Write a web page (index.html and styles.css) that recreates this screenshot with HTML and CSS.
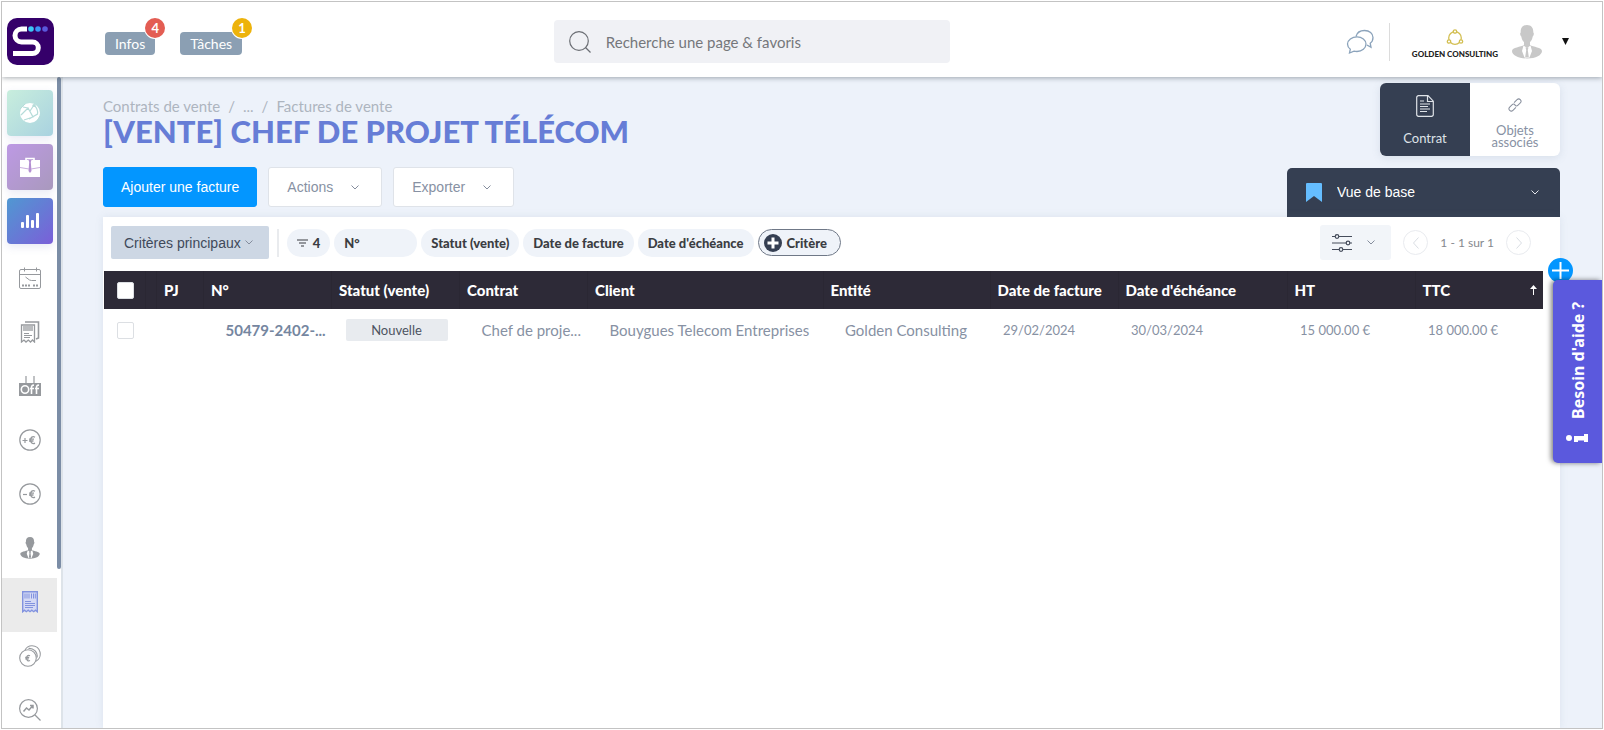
FILE: index.html
```html
<!DOCTYPE html>
<html lang="fr">
<head>
    <meta charset="UTF-8">
    <meta name="viewport" content="width=device-width, initial-scale=1.0">
    <title>Factures de vente</title>
    <link rel="stylesheet" href="styles.css">
</head>
<body>

<div class="app">

    <!-- Top bar -->
    <header class="topbar">
        <div class="topbar-left">
            <a href="#" class="logo" aria-label="Accueil">
                <svg width="47" height="47" viewBox="0 0 47 47">
                    <rect width="47" height="47" rx="10" fill="#35006a"/>
                    <path d="M20 11h-5.500a6.500 6.500 0 0 0 0 13h11a5.800 5.800 0 0 1 0 11.600H6" fill="none" stroke="#fff" stroke-width="5"/>
                    <circle cx="24" cy="11" r="2.800" fill="#3cc8f5"/>
                    <circle cx="31" cy="11" r="2.800" fill="#3b93f7"/>
                    <circle cx="38" cy="11" r="2.800" fill="#5b57dc"/>
                </svg>
            </a>
            <button type="button" class="notif">Infos<span class="count red">4</span></button>
            <button type="button" class="notif">Tâches<span class="count yellow">1</span></button>
        </div>

        <form class="search">
            <svg width="24" height="24" viewBox="0 0 24 24" fill="none" stroke="#6b6e74" stroke-width="1.200">
                <circle cx="10" cy="11" r="9.300"/>
                <path d="M16.500 17.500l5 5"/>
            </svg>
            <input type="text" aria-label="Recherche" placeholder="Recherche une page &amp; favoris">
        </form>

        <div class="topbar-right">
            <button type="button" class="chat" aria-label="Messages">
                <svg width="28" height="26" viewBox="0 0 28 26" fill="none" stroke="#8ba3bb" stroke-width="1.300">
                    <path d="M10 7.500C11 3.500 14.500 1.500 18.500 1.500c5 0 8.500 3 8.500 7 0 2.500-1 4.500-2.800 5.700l.8 4-4.200-2.200"/>
                    <path d="M11 7.800c5 0 9 3.200 9 7.200s-4 7.500-9 7.500c-1 0-2-.100-3-.400L3.500 24l.8-3.800C2.500 18.800 1.500 17 1.500 15c0-4 4.500-7.200 9.500-7.200z"/>
                </svg>
            </button>
            <div class="company">
                <svg width="18" height="17" viewBox="0 0 18 17" fill="none" stroke="#d3bf52" stroke-width="1.300">
                    <circle cx="9" cy="9" r="6.300"/>
                    <g fill="#fff"><circle cx="9" cy="2.500" r="1.700"/><circle cx="3" cy="12.500" r="1.700"/><circle cx="15" cy="12.500" r="1.700"/></g>
                </svg>
                <span>GOLDEN CONSULTING</span>
            </div>
            <svg width="30" height="34" viewBox="0 0 30 34" fill="#c8c8c8">
                <path d="M15 0c4.500 0 6.500 3 6.300 7.500 1 .5.500 3.500-.6 4-.5 3-1.500 4.500-2.700 5.500v3c3 2 12 2.500 12 6 0 4-6 7.500-15 7.500S0 30 0 26c0-3.500 9-4 12-6v-3c-1.200-1-2.200-2.500-2.700-5.500-1.100-.5-1.600-3.500-.6-4C8.500 3 10.500 0 15 0z"/>
                <path d="M11.500 20.500L15 23l3.500-2.500L20 26l-2.500 6.500h-5L10 26z" fill="#fff"/>
                <path d="M13.500 22.500h3l-.7 2.500 1 7h-3.600l1-7z"/>
            </svg>
            <button type="button" class="caret" aria-label="Mon compte">
                <svg width="7" height="7" viewBox="0 0 7 7"><path d="M0 0h7L3.500 7z" fill="#111"/></svg>
            </button>
        </div>
    </header>

    <div class="body">

        <!-- Side menu -->
        <nav class="sidebar">
            <div class="scroll-thumb"></div>
            <a href="#" class="tile green" aria-label="Réseau">
                <svg width="22" height="22" viewBox="0 0 22 22">
                    <circle cx="11" cy="11" r="10" fill="#fff"/>
                    <path d="M2 13L9 6l5 9-9 3M15 3l-4 6M15 3c3 3 4 6 3.500 9L10 17M4 5l5 1" fill="none" stroke="#b5dcd9" stroke-width="1.200"/>
                    <path d="M1 7l5-5M18 19l3-5" stroke="#b5dcd9"/>
                    <circle cx="15" cy="3.500" r="1.600" fill="#b5dcd9"/>
                </svg>
            </a>
            <a href="#" class="tile purple" aria-label="Missions">
                <svg width="22" height="20" viewBox="0 0 22 20">
                    <path d="M7 3V1.500h8V3" fill="none" stroke="#fff" stroke-width="1.600"/>
                    <path d="M1 3h20v17H1z" fill="#fff"/>
                    <path d="M9.500 3h3l-.7 2 .7 9-1.500 2-1.500-2 .7-9z" fill="#b48fd2"/>
                    <path d="M1 10.500l9 1.500M21 10.500L12 12" stroke="#c9aede" fill="none"/>
                </svg>
            </a>
            <a href="#" class="tile blue" aria-label="Statistiques">
                <svg width="18" height="16" viewBox="0 0 18 16" fill="#fff">
                    <rect y="9" width="3" height="6" rx="1"/><rect x="5" y="2" width="3" height="13" rx="1"/>
                    <rect x="10" y="7" width="3" height="8" rx="1"/><rect x="15" width="3" height="15" rx="1"/>
                </svg>
            </a>
            <a href="#" class="item" aria-label="Planning">
                <svg width="22" height="22" viewBox="0 0 22 22" fill="none" stroke="#96999d">
                    <rect x=".5" y="2.500" width="21" height="19" rx="1.500"/>
                    <path d="M.5 7.500h21M5.500.5v4M17.500.5v4M6.500 10l4 3 2 .5h4.500"/>
                    <path d="M3 18.500h8M14 18.500h5" stroke-width="2" stroke-dasharray="2 1"/>
                </svg>
            </a>
            <a href="#" class="item" aria-label="Factures d'achat">
                <svg width="20" height="22" viewBox="0 0 20 22" fill="none" stroke="#96999d">
                    <path d="M5 1h13.500v16l-2.500 1" stroke-width="1.600"/>
                    <path d="M1.500 4h13v17l-2-2-2 2-2.200-2-2.300 2-2-2-2.500 2z" stroke-width="1.300"/>
                    <path d="M4 5v5M6 5v5M8 5v5M10 5v5M12 5v5" stroke-width="1.300"/>
                    <path d="M4 12.500h5M4 14.500h8M4 16.500h6"/>
                </svg>
            </a>
            <a href="#" class="item" aria-label="Absences">
                <svg width="22" height="20" viewBox="0 0 22 20">
                    <path d="M7 0v8M15 0v8" stroke="#96999d" stroke-width="1.200"/>
                    <rect y="7" width="22" height="13" fill="#96999d"/>
                    <g fill="none" stroke="#fff" stroke-width="1.600">
                        <circle cx="6" cy="13.500" r="3.700"/>
                        <path d="M12.500 18v-6.500c0-2 1-2.500 2.500-2.300M11 12.500h4M17.500 18v-6.500c0-2 1-2.500 2.500-2.300M16 12.500h4"/>
                    </g>
                </svg>
            </a>
            <a href="#" class="item" aria-label="Recettes">
                <svg width="22" height="22" viewBox="0 0 22 22" fill="none" stroke="#96999d" stroke-width="1.200">
                    <circle cx="11" cy="11" r="10.200"/>
                    <path d="M3.500 11.500h5M6 9v5"/>
                    <path d="M16 8.200c-2.500-1.500-4.500.3-4.500 2.800s2 4.500 4.500 3.200M10 10.200h5M10 12h4.500" stroke-width="1.300"/>
                </svg>
            </a>
            <a href="#" class="item" aria-label="Dépenses">
                <svg width="22" height="22" viewBox="0 0 22 22" fill="none" stroke="#96999d" stroke-width="1.200">
                    <circle cx="11" cy="11" r="10.200"/>
                    <path d="M4 11.500h4"/>
                    <path d="M16 8.200c-2.500-1.500-4.500.3-4.500 2.800s2 4.500 4.500 3.200M10 10.200h5M10 12h4.500" stroke-width="1.300"/>
                </svg>
            </a>
            <a href="#" class="item" aria-label="Ressources">
                <svg width="20" height="22" viewBox="0 0 30 34" fill="#96999d">
                    <path d="M15 0c4.500 0 6.500 3 6.300 7.500 1 .5.500 3.500-.6 4-.5 3-1.500 4.500-2.700 5.500v3c3 2 12 2.500 12 6 0 4-6 7.500-15 7.500S0 30 0 26c0-3.500 9-4 12-6v-3c-1.200-1-2.200-2.500-2.700-5.500-1.100-.5-1.600-3.500-.6-4C8.500 3 10.500 0 15 0z"/>
                    <path d="M11.500 20.500L15 23l3.500-2.500L20 26l-2.500 6.500h-5L10 26z" fill="#fff"/>
                    <path d="M13.500 22.500h3l-.7 2.500 1 7h-3.600l1-7z"/>
                </svg>
            </a>
            <a href="#" class="item active" aria-label="Factures de vente">
                <svg width="16" height="22" viewBox="0 0 16 22" fill="none" stroke="#8293df">
                    <path d="M.7.7h14.600v20l-1.800-1.500-1.800 1.500-1.900-1.500L8 20.700l-1.800-1.500-1.900 1.500-1.800-1.500L.7 20.700z" stroke-width="1.400" fill="#d5daf5"/>
                    <path d="M3 2.500v5M5 2.500v5M7 2.500v5M9.500 2.500v5M11.500 2.500v5M13.300 2.500v5"/>
                    <path d="M3 10.500h6M3 12.500h10M3 14.500h10M3 16.500h8"/>
                </svg>
            </a>
            <a href="#" class="item" aria-label="Paiements">
                <svg width="22" height="22" viewBox="0 0 22 22" fill="none" stroke="#96999d" stroke-width="1.100">
                    <path d="M6 5.200C7.200 2.500 10 .7 13 .7a8.300 8.300 0 0 1 3.500 15.800"/>
                    <circle cx="9" cy="13" r="8.300"/>
                    <path d="M9.500 3.400c5-.4 9.200 3.600 8.700 9.100"/>
                    <path d="M11 10.800c-2-1.200-3.500.2-3.500 2.200s1.500 3.600 3.500 2.500M6.200 12.400h4M6.200 13.900h3.600" stroke-width="1.200"/>
                </svg>
            </a>
            <a href="#" class="item" aria-label="Analyse">
                <svg width="22" height="22" viewBox="0 0 22 22" fill="none" stroke="#96999d" stroke-width="1.200">
                    <circle cx="9.500" cy="9.500" r="8.900"/>
                    <path d="M16 16l5.500 5.500"/>
                    <path d="M4.500 12.500l3-3.500 2.500 2 3.500-4M11 6.500h3v3" stroke-width="1.500"/>
                </svg>
            </a>
        </nav>

        <main class="content">
            <div class="page-head">
                <div class="head-left">
                    <div class="breadcrumb">
                        <a href="#">Contrats de vente</a><span>/</span><a href="#">...</a><span>/</span><a href="#">Factures de vente</a>
                    </div>
                    <h1>[VENTE] CHEF DE PROJET TÉLÉCOM</h1>
                    <div class="actions">
                        <button type="button" class="btn primary">Ajouter une facture</button>
                        <button type="button" class="btn">Actions
                            <svg class="chevron" viewBox="0 0 8 5"><path d="M.5.5L4 4 7.500.5"/></svg>
                        </button>
                        <button type="button" class="btn">Exporter
                            <svg class="chevron" viewBox="0 0 8 5"><path d="M.5.5L4 4 7.500.5"/></svg>
                        </button>
                    </div>
                </div>

                <div class="head-right">
                    <div class="tabs">
                        <a href="#" class="tab current">
                            <svg width="18" height="22" viewBox="0 0 18 22" fill="none" stroke="#dfe3e8" stroke-width="1.200">
                                <path d="M2.500.7h9.500l5.300 5.500v13.300a1.800 1.800 0 0 1-1.800 1.800h-13A1.800 1.800 0 0 1 .7 19.500v-17A1.800 1.800 0 0 1 2.500.7zM11.500.7v5.800h5.800"/>
                                <path d="M4 6h4M4 9h10M4 11.500h8M4 14h10M4 16.500h7"/>
                            </svg>
                            Contrat
                        </a>
                        <a href="#" class="tab">
                            <svg width="14" height="14" viewBox="0 0 14 14" fill="none" stroke="#878e9c">
                                <g transform="rotate(-45 7 7)">
                                    <path d="M6 9.300H1.800a2.300 2.300 0 0 1 0-4.600H5a2.300 2.300 0 0 1 2.300 2.300"/>
                                    <path d="M8 4.700h4.200a2.300 2.300 0 0 1 0 4.600H9A2.300 2.300 0 0 1 6.700 7"/>
                                </g>
                            </svg>
                            Objets associés
                        </a>
                    </div>
                    <div class="view">
                        <svg width="16" height="19" viewBox="0 0 16 19"><path d="M1 0h14a1 1 0 0 1 1 1v18l-8-6-8 6V1a1 1 0 0 1 1-1z" fill="#65bdff"/></svg>
                        <select aria-label="Vue">
                            <option>Vue de base</option>
                        </select>
                        <svg class="chevron" viewBox="0 0 8 5"><path d="M.5.5L4 4 7.500.5"/></svg>
                    </div>
                </div>
            </div>

            <section class="card">
                <button type="button" class="add" aria-label="Ajouter">
                    <svg width="25" height="25" viewBox="0 0 25 25"><circle cx="12.500" cy="12.500" r="12.500" fill="#0396ff"/><path d="M4 12.500h17M12.500 4v17" stroke="#fff" stroke-width="2"/></svg>
                </button>

                <!-- Filters -->
                <div class="filters">
                    <button type="button" class="criteria">Critères principaux
                        <svg class="chevron" viewBox="0 0 8 5"><path d="M.5.5L4 4 7.500.5"/></svg>
                    </button>
                    <div class="chips">
                        <button type="button" class="chip">
                            <svg width="11" height="8" viewBox="0 0 11 8" stroke="#3b3d42" stroke-width="1.200"><path d="M0 1h11M2 4h7M4 7h3"/></svg>4
                        </button>
                        <button type="button" class="chip wide">N°</button>
                        <button type="button" class="chip">Statut (vente)</button>
                        <button type="button" class="chip">Date de facture</button>
                        <button type="button" class="chip">Date d'échéance</button>
                        <button type="button" class="chip new">
                            <svg width="18" height="18" viewBox="0 0 18 18"><circle cx="9" cy="9" r="9" fill="#353f52"/><path d="M3.500 9h11M9 3.500v11" stroke="#fff" stroke-width="3"/></svg>Critère
                        </button>
                    </div>
                    <div class="pager">
                        <button type="button" class="settings" aria-label="Réglages">
                            <svg width="20" height="18" viewBox="0 0 20 18" fill="#f2f5f9" stroke="#454c5b" stroke-width="1.200">
                                <path d="M0 2.500h20M0 9h20M0 15.500h20"/>
                                <circle cx="5" cy="2.500" r="1.800"/><circle cx="16" cy="9" r="1.800"/><circle cx="9" cy="15.500" r="1.800"/>
                            </svg>
                            <svg class="chevron" viewBox="0 0 8 5"><path d="M.5.5L4 4 7.500.5"/></svg>
                        </button>
                        <button type="button" class="arrow" aria-label="Page précédente">
                            <svg width="6" height="12" viewBox="0 0 6 12"><path d="M5.500.5L.5 6l5 5.500"/></svg>
                        </button>
                        <span>1 - 1 sur 1</span>
                        <button type="button" class="arrow" aria-label="Page suivante">
                            <svg width="6" height="12" viewBox="0 0 6 12"><path d="M.5.5l5 5.500-5 5.500"/></svg>
                        </button>
                    </div>
                </div>

                <!-- Invoices -->
                <table>
                    <colgroup>
                        <col class="c-check"><col class="c-gap"><col class="c-pj"><col class="c-std"><col class="c-std"><col class="c-std"><col>
                        <col class="c-entity"><col class="c-std"><col class="c-due"><col class="c-std"><col class="c-std">
                    </colgroup>
                    <thead>
                        <tr>
                            <th class="check"><input type="checkbox" aria-label="Tout sélectionner"></th>
                            <th></th>
                            <th>PJ</th>
                            <th>N°</th>
                            <th>Statut (vente)</th>
                            <th>Contrat</th>
                            <th>Client</th>
                            <th>Entité</th>
                            <th>Date de facture</th>
                            <th>Date d'échéance</th>
                            <th>HT</th>
                            <th><div class="sorted">TTC
                                <svg width="7" height="10" viewBox="0 0 7 10"><path d="M3.500 10V3" stroke="#fff"/><path d="M0 4L3.500 0 7 4z" fill="#fff"/></svg>
                            </div></th>
                        </tr>
                    </thead>
                    <tbody>
                        <tr>
                            <td class="check"><input type="checkbox" aria-label="Sélectionner la facture"></td>
                            <td></td>
                            <td></td>
                            <td class="number">50479-2402-...</td>
                            <td class="status"><span>Nouvelle</span></td>
                            <td>Chef de proje...</td>
                            <td>Bouygues Telecom Entreprises</td>
                            <td>Golden Consulting</td>
                            <td class="value">29/02/2024</td>
                            <td class="value">30/03/2024</td>
                            <td class="value">15 000.00 €</td>
                            <td class="value">18 000.00 €</td>
                        </tr>
                    </tbody>
                </table>
            </section>
        </main>
    </div>

    <button type="button" class="help">
        <svg width="22" height="8" viewBox="0 0 22 8" fill="#fff">
            <g transform="translate(22 0) rotate(90)"><circle cx="4" cy="3" r="3"/><path d="M0 8h6v10h2v4H0v-4h1.500v-6H0z"/></g>
        </svg>
        Besoin d'aide ?
    </button>
</div>

</body>
</html>
```

FILE: styles.css
```css
* {
    box-sizing: border-box;
}

body {
    margin: 0;
    padding: 1px;
    background: #fff;
    font-family: Lato, "Liberation Sans", sans-serif;
    font-size: 15px;
    color: #8791a3;
}

a {
    color: inherit;
    text-decoration: none;
}

button,
select,
input {
    font-family: inherit;
    font-size: inherit;
    color: inherit;
    margin: 0;
}

button {
    border: 0;
    padding: 0;
    background: none;
    cursor: pointer;
}

svg {
    flex: none;
    display: block;
}

.chevron {
    width: 8px;
    height: 5px;
    fill: none;
    stroke: #858d9d;
    overflow: visible;
}

.app {
    position: relative;
    display: flex;
    flex-direction: column;
    height: calc(100vh - 2px);
    border: 1px solid #c3c3c3;
    overflow: hidden;
}

/* Top bar */
.topbar {
    position: relative;
    z-index: 2;
    display: grid;
    grid-template-columns: 11fr 396px 13fr;
    align-items: center;
    flex: none;
    height: 75px;
    padding-top: 4px;
    background: #fff;
    box-shadow: 0 1px 5px rgba(60, 70, 80, 0.45);
}

.topbar-left {
    display: flex;
    align-items: center;
    gap: 25px;
    padding-left: 5px;
}

.logo {
    margin-right: 26px;
}

.notif {
    position: relative;
    height: 23px;
    margin-top: 4px;
    padding: 0 10px;
    border-radius: 4px;
    background: #8b9fb3;
    color: #fff;
    font-size: 14px;
}

.count {
    position: absolute;
    top: -14px;
    right: -10px;
    width: 20px;
    height: 20px;
    border-radius: 50%;
    font-size: 13px;
    font-weight: bold;
    line-height: 20px;
    box-shadow: 0 0 0 1px #fff;
}

.red {
    background: #e35d53;
}

.yellow {
    background: #edb30b;
}

.search {
    display: flex;
    align-items: center;
    gap: 13px;
    height: 43px;
    padding: 0 15px;
    border-radius: 4px;
    background: #f0f1f5;
}

.search input {
    flex: 1;
    min-width: 0;
    border: 0;
    outline: 0;
    background: none;
    padding: 0;
}

.search input::placeholder {
    color: #75777b;
    opacity: 1;
}

.topbar-right {
    display: flex;
    align-items: center;
    justify-content: flex-end;
    padding-right: 33px;
}

.chat {
    padding-right: 15px;
}

.company {
    display: flex;
    flex-direction: column;
    align-items: center;
    justify-content: center;
    gap: 2px;
    height: 38px;
    padding: 5px 14px 0 22px;
    border-left: 1px solid #dcdcdc;
    color: #222;
    font-size: 8px;
    font-weight: 900;
    line-height: 12px;
}

.caret {
    margin-left: 20px;
}

/* Side menu */
.body {
    display: flex;
    flex: 1;
    min-height: 0;
}

.sidebar {
    position: relative;
    z-index: 1;
    flex: none;
    display: flex;
    flex-direction: column;
    width: 61px;
    padding-top: 13px;
    background: #fff;
    overflow: hidden;
    border-right: 2px solid #dde3e9;
}

.scroll-thumb {
    position: absolute;
    top: 0;
    right: 0;
    width: 4px;
    height: 492px;
    border-radius: 2px;
    background: #7b8da6;
}

.tile,
.item {
    flex: none;
    display: flex;
    align-items: center;
    justify-content: center;
}

.tile {
    width: 46px;
    height: 46px;
    margin: 0 0 8px 5px;
    border-radius: 4px;
    box-shadow: 0 3px 8px rgba(100, 110, 180, 0.15);
}

.green {
    background: linear-gradient(135deg, #c8eedd, #a9d2e0);
}

.purple {
    background: linear-gradient(135deg, #bd99e4, #a999bd);
}

.blue {
    margin-bottom: 10px;
    background: linear-gradient(135deg, #5098d2, #7b5fd8);
}

.item {
    width: 55px;
    height: 54px;
    padding-bottom: 6px;
}

.active {
    background: #ebebeb;
}

/* Page */
.content {
    flex: 1;
    min-width: 0;
    display: flex;
    flex-direction: column;
    padding: 6px 42px 0 40px;
    background: #edf2fa;
}

.page-head {
    display: flex;
    justify-content: space-between;
}

.head-left {
    padding-top: 12px;
}

.breadcrumb {
    display: flex;
    gap: 8px;
    line-height: 22px;
    color: #adb5bf;
}

h1 {
    margin: 0 0 22px;
    font-size: 31px;
    font-weight: 900;
    line-height: 28px;
    color: #667dd6;
    white-space: nowrap;
}

.actions {
    display: flex;
    gap: 11px;
}

.btn {
    display: flex;
    align-items: center;
    gap: 18px;
    height: 40px;
    padding: 0 22px 0 18px;
    border: 1px solid #dfe3e9;
    border-radius: 3px;
    background: #fff;
    font-family: "Liberation Sans", Arial, sans-serif;
    font-size: 14px;
}

.primary {
    padding: 0 17px;
    border-color: #0396ff;
    background: #0396ff;
    color: #fff;
}

.head-right {
    display: flex;
    flex-direction: column;
    align-items: flex-end;
    gap: 12px;
}

.tabs {
    display: flex;
    border-radius: 6px;
    overflow: hidden;
    background: #fff;
    box-shadow: 0 2px 8px rgba(100, 120, 150, 0.15);
}

.tab {
    display: flex;
    flex-direction: column;
    align-items: center;
    justify-content: space-between;
    width: 90px;
    height: 73px;
    padding: 15px 14px 8px;
    font-size: 13px;
    line-height: 12px;
    text-align: center;
}

.current {
    padding: 12px 14px;
    background: #353f52;
    color: #dfe3e8;
}

.view {
    display: flex;
    align-items: center;
    gap: 15px;
    width: 273px;
    height: 49px;
    padding: 0 21px 0 19px;
    border-radius: 5px 5px 0 0;
    background: #353f52;
    color: #fff;
    font-family: "Liberation Sans", Arial, sans-serif;
    font-size: 14px;
}

.view select {
    flex: 1;
    appearance: none;
    border: 0;
    padding: 0 0 2px;
    background: #353f52;
}

.view .chevron {
    stroke: #e4e7ec;
}

.card {
    position: relative;
    flex: 1;
    padding-top: 8px;
    background: #fff;
    box-shadow: 0 0 8px rgba(100, 120, 150, 0.12);
}

.add {
    position: absolute;
    top: 41px;
    right: -13px;
}

/* Filters */
.filters {
    display: flex;
    align-items: center;
    height: 35px;
    padding: 0 29px 0 8px;
}

.criteria {
    display: flex;
    align-items: center;
    gap: 4px;
    height: 33px;
    padding: 0 16px 0 13px;
    border-radius: 2px;
    background: #cdd7e4;
    color: #40495a;
    font-family: "Liberation Sans", Arial, sans-serif;
    font-size: 14px;
}

.chips {
    display: flex;
    align-items: center;
    gap: 4px;
    margin-left: 8px;
    padding-left: 8px;
    border-left: 2px solid #e9ebee;
}

.chip {
    display: flex;
    align-items: center;
    gap: 5px;
    height: 28px;
    padding: 0 10px;
    border-radius: 14px;
    background: #eff3f9;
    color: #3b3d42;
    font-size: 13px;
    font-weight: 900;
}

.wide {
    width: 83px;
}

.new {
    height: 27px;
    padding: 0 13px 0 5px;
    border: 1px solid #6f7887;
}

.pager {
    display: flex;
    align-items: center;
    gap: 12px;
    margin-left: auto;
    font-size: 12px;
    color: #85888e;
}

.settings {
    display: flex;
    align-items: center;
    gap: 15px;
    height: 35px;
    padding: 0 16px 0 12px;
    border-radius: 3px;
    background: #f2f5f9;
}

.arrow {
    display: flex;
    align-items: center;
    justify-content: center;
    width: 25px;
    height: 25px;
    border: 1px solid #e9ebef;
    border-radius: 50%;
}

.arrow path {
    fill: none;
    stroke: #d9dde3;
}

/* Invoices */
table {
    width: calc(100% - 18px);
    margin: 11px 17px 0 1px;
    border-collapse: collapse;
    table-layout: fixed;
}

.c-check {
    width: 41px;
}

.c-gap {
    width: 11px;
}

.c-pj {
    width: 47px;
}

.c-std {
    width: 128px;
}

.c-entity {
    width: 167px;
}

.c-due {
    width: 169px;
}

th {
    height: 38px;
    padding: 0 0 0 7px;
    background: #2d2a37;
    border-left: 1px solid #2a2733;
    color: #fff;
    font-weight: 900;
    text-align: left;
    white-space: nowrap;
}

td {
    height: 42px;
    padding: 0 0 0 22px;
    white-space: nowrap;
}

.check {
    padding: 0 0 0 12px;
}

.check input {
    display: block;
    appearance: none;
    width: 17px;
    height: 17px;
    border: 1px solid #dcdfe3;
    border-radius: 2px;
    background: #fff;
}

.sorted {
    display: flex;
    align-items: center;
    justify-content: space-between;
    padding-right: 6px;
}

.number {
    font-weight: bold;
    color: #7586a0;
}

.status {
    padding: 0 12px 0 14px;
}

.status span {
    display: block;
    border-radius: 2px;
    background: #e8ebef;
    color: #4d5461;
    font-size: 13px;
    line-height: 22px;
    text-align: center;
}

.value {
    padding-left: 13px;
    font-size: 13px;
}

/* Help tab, laid over the right edge of the page */
.help {
    position: absolute;
    z-index: 3;
    top: 278px;
    right: 0;
    display: flex;
    align-items: center;
    gap: 15px;
    height: 183px;
    width: 49px;
    padding: 21px 0 0;
    border-radius: 0 5px 5px 0;
    background: #5b59dd;
    box-shadow: 2px 0 5px rgba(0, 0, 0, 0.5);
    color: #fff;
    font-family: "Noto Sans", sans-serif;
    font-size: 16px;
    font-weight: bold;
    white-space: nowrap;
    writing-mode: vertical-rl;
    transform: rotate(180deg);
}
```
